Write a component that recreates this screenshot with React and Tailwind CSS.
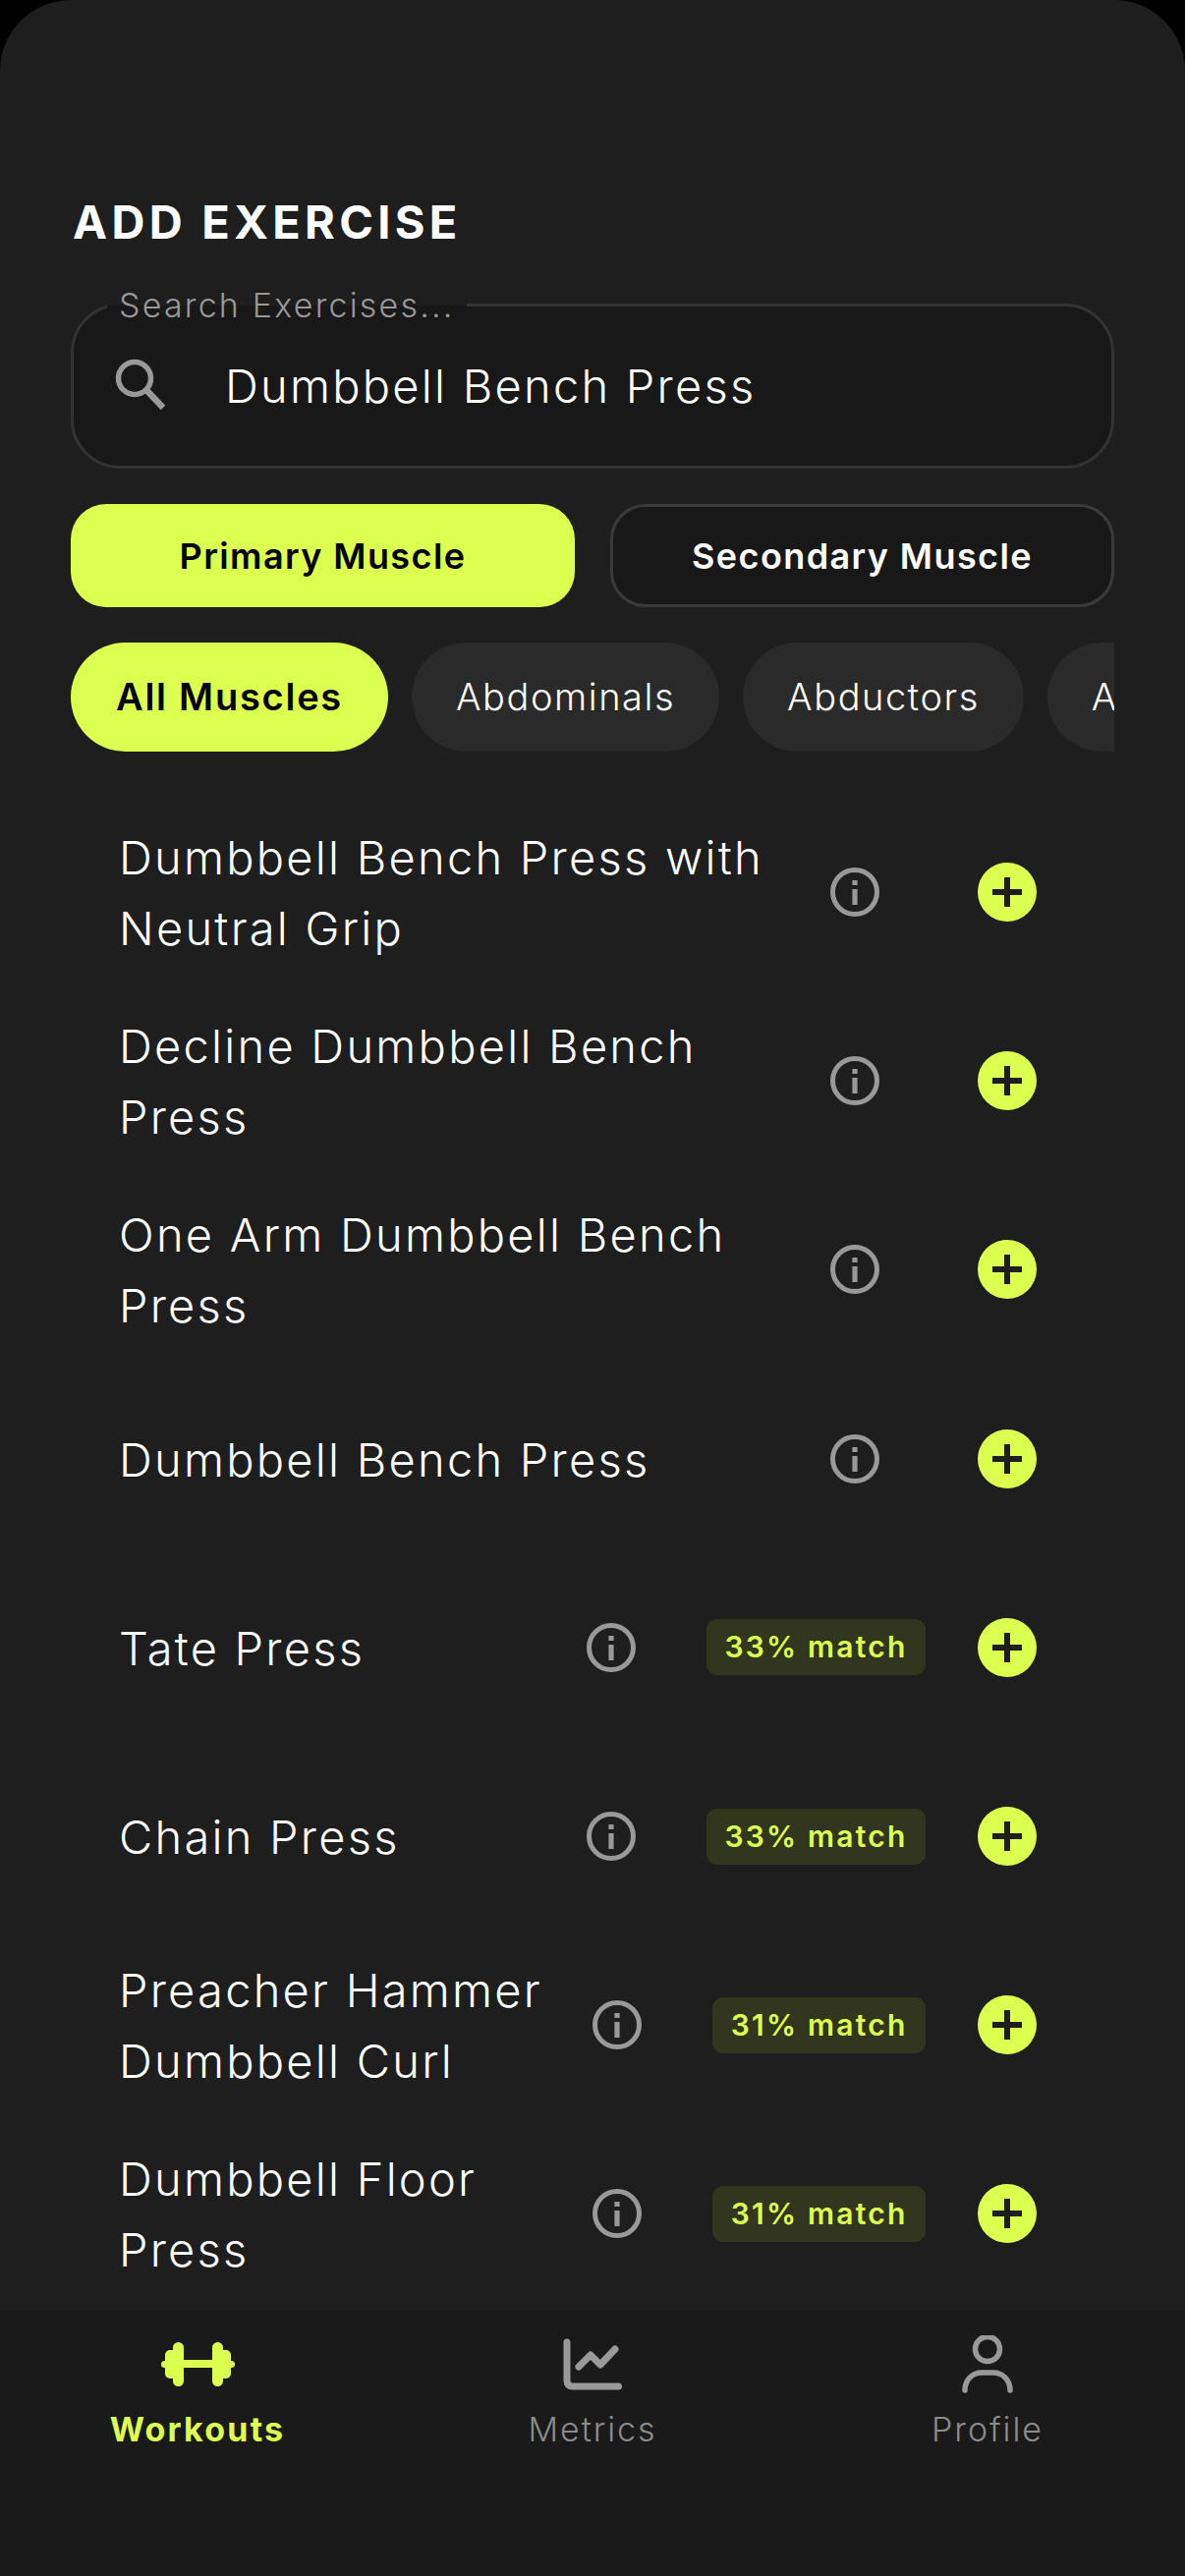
import { useState } from 'react'

const exercises = [
  { name: 'Dumbbell Bench Press with Neutral Grip' },
  { name: 'Decline Dumbbell Bench Press' },
  { name: 'One Arm Dumbbell Bench Press' },
  { name: 'Dumbbell Bench Press' },
  { name: 'Tate Press', match: 33 },
  { name: 'Chain Press', match: 33 },
  { name: 'Preacher Hammer Dumbbell Curl', match: 31 },
  { name: 'Dumbbell Floor Press', match: 31 },
]

const chips = ['All Muscles', 'Abdominals', 'Abductors', 'Adductors']

const SearchIcon = () => (
  <svg width="60" height="60" viewBox="0 0 60 60" fill="none" stroke="#999" strokeWidth="5.5">
    <circle cx="22" cy="22" r="16.5" />
    <path d="M34 34 L51 52" strokeWidth="6.5" />
  </svg>
)

const InfoIcon = () => (
  <svg width="50" height="50" viewBox="0 0 50 50" fill="none">
    <circle cx="25" cy="25" r="22.5" stroke="#999" strokeWidth="5" />
    <rect x="22.4" y="13" width="5.2" height="5" fill="#999" />
    <rect x="22.4" y="22" width="5.2" height="16" fill="#999" />
  </svg>
)

const PlusIcon = () => (
  <div className="w-[60px] h-[60px] rounded-full bg-[#dcff50] flex items-center justify-center shrink-0">
    <svg width="36" height="36" viewBox="0 0 36 36" fill="#1e1e1e">
      <rect x="15" y="3" width="6" height="30" />
      <rect x="3" y="15" width="30" height="6" />
    </svg>
  </div>
)

const DumbbellIcon = () => (
  <svg width="75" height="45" viewBox="0 0 75 45" fill="#dcff50">
    <rect x="12" y="0" width="11" height="45" rx="5.5" />
    <rect x="52" y="0" width="11" height="45" rx="5.5" />
    <rect x="4" y="8" width="12" height="29" rx="5" />
    <rect x="59" y="8" width="12" height="29" rx="5" />
    <rect x="0" y="19" width="8" height="7" rx="3.5" />
    <rect x="67" y="19" width="8" height="7" rx="3.5" />
    <rect x="22" y="18" width="31" height="8" />
  </svg>
)

const MetricsIcon = () => (
  <svg width="60" height="53" viewBox="0 0 60 53" fill="none" stroke="#999" strokeWidth="7" strokeLinecap="round" strokeLinejoin="round">
    <path d="M4 4 V43 Q4 49 10 49 H56.5" />
    <path d="M16 29 L28 17 L38 27 L53 11" />
  </svg>
)

const ProfileIcon = () => (
  <svg width="52" height="59" viewBox="0 0 52 59" fill="none" stroke="#999" strokeWidth="5.5" strokeLinecap="round">
    <circle cx="26" cy="14" r="12.5" />
    <path d="M3 56 C3 45 11 38 20 38 H32 C41 38 49 45 49 56" />
  </svg>
)

function ExerciseRow({ item }) {
  return (
    <div className="h-[192.2px] flex items-center pl-[49px] pr-[151px]">
      <div className="flex-1 pt-[2px] pr-[40px] text-[47px] leading-[72px] font-light tracking-[2.25px] text-white">{item.name}</div>
      <InfoIcon />
      {item.match ? (
        <div className="ml-[72px] mr-[53px] h-[57px] px-[18.5px] flex items-center rounded-[11px] bg-[#33361f] text-[#dcff50] text-[30px] font-semibold tracking-[2.2px]">
          {item.match}% match
        </div>
      ) : (
        <div className="w-[100px]" />
      )}
      <PlusIcon />
    </div>
  )
}

function NavItem({ icon, label, active }) {
  return (
    <div className="flex-1 flex flex-col items-center">
      <div className="h-[60px] flex items-center justify-center">{icon}</div>
      <div className={active ? 'mt-[16px] text-[34px] leading-[42px] font-bold tracking-[2.2px] text-[#dcff50]' : 'mt-[16px] text-[34px] leading-[42px] font-light tracking-[1.9px] text-[#8c8c8c]'}>
        {label}
      </div>
    </div>
  )
}

export default function App() {
  const [tab] = useState('primary')

  return (
    <div className="w-[1206px] h-[2622px] bg-black font-['Inter',sans-serif]">
      <div className="h-full rounded-t-[72px] bg-[#1e1e1e] overflow-hidden flex flex-col">
        <div className="px-[72px] pt-[198px]">
          <h1 className="ml-[2px] text-[47px] leading-[56px] font-bold tracking-[4.3px] text-white">ADD EXERCISE</h1>

          {/* search */}
          <div className="relative mt-[55px] h-[168px] rounded-[50px] border-[3px] border-[#333] bg-[#181818] flex items-center">
            <span className="absolute left-[34px] -top-[21px] px-[12px] bg-[linear-gradient(#1e1e1e_50%,#181818_50%)] text-[34px] leading-[40px] font-light tracking-[2.2px] text-[#999]">Search Exercises...</span>
            <div className="ml-[40px]"><SearchIcon /></div>
            <span className="ml-[54px] text-[47px] font-light tracking-[2.25px] text-white">Dumbbell Bench Press</span>
          </div>

          {/* primary / secondary */}
          <div className="mt-[36px] grid grid-cols-2 gap-[36px]">
            <div className={`h-[105px] rounded-[36px] flex items-center justify-center text-[36px] font-semibold tracking-[1.4px] ${tab === 'primary' ? 'bg-[#dcff50] text-black' : ''}`}>Primary Muscle</div>
            <div className="h-[105px] rounded-[36px] border-[3px] border-[#3a3a3a] bg-[#181818] flex items-center justify-center text-[36px] font-semibold tracking-[1.4px] text-white">Secondary Muscle</div>
          </div>

          {/* chips */}
          <div className="mt-[36px] flex gap-[24px] overflow-hidden">
            {chips.map((c, i) => (
              <div key={c} className={i === 0
                ? 'shrink-0 h-[111px] px-[46px] rounded-full bg-[#dcff50] text-black font-semibold text-[38px] tracking-[1.75px] flex items-center'
                : 'shrink-0 h-[111px] px-[45px] rounded-full bg-[#2a2a2a] text-white text-[38px] font-light tracking-[1.55px] flex items-center'}>
                {c}
              </div>
            ))}
          </div>
        </div>

        {/* exercise list */}
        <div className="flex-1 overflow-hidden mt-[47px] ml-[72px]">
          {exercises.map((e) => <ExerciseRow key={e.name} item={e} />)}
        </div>

        {/* bottom nav */}
        <div className="h-[270px] bg-[#1a1a1a] flex pt-[24px]">
          <NavItem icon={<DumbbellIcon />} label="Workouts" active />
          <NavItem icon={<MetricsIcon />} label="Metrics" />
          <NavItem icon={<ProfileIcon />} label="Profile" />
        </div>
      </div>
    </div>
  )
}
